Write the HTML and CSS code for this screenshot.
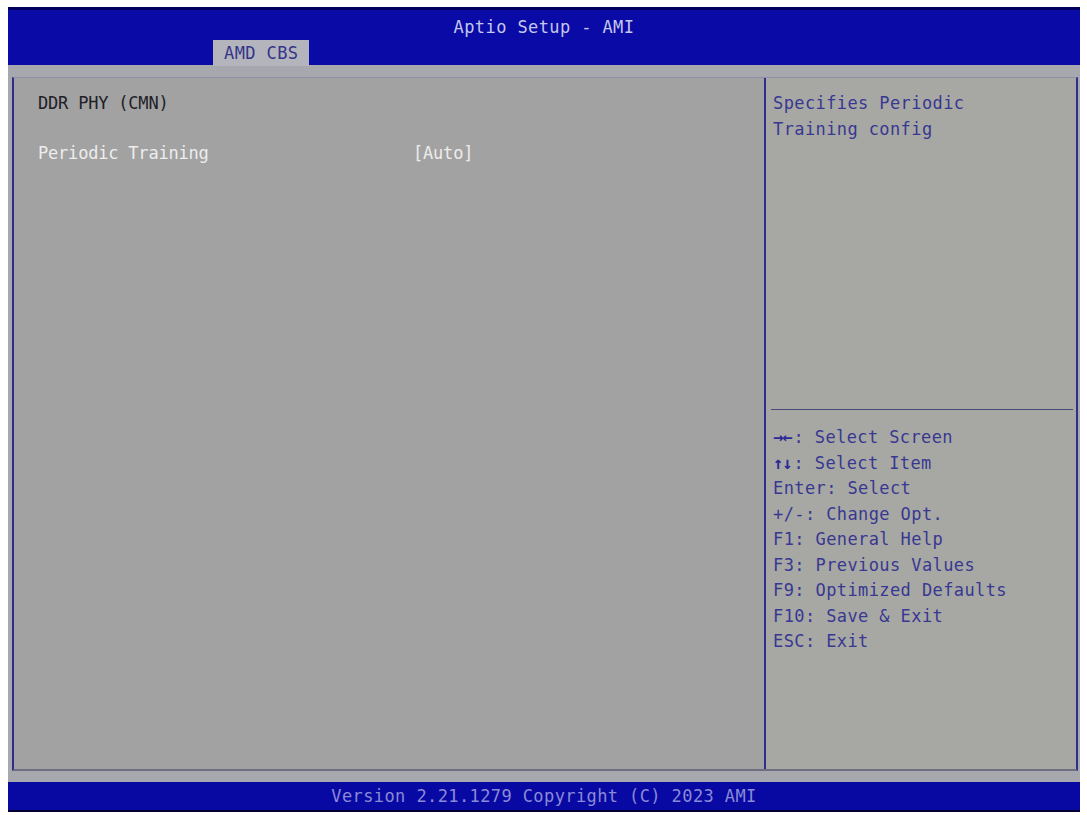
FILE: index.html
```html
<!DOCTYPE html>
<html lang="en">
<head>
    <meta charset="UTF-8">
    <meta name="viewport" content="width=device-width, initial-scale=1.0">
    <title>Aptio Setup - AMI</title>
    <link rel="stylesheet" href="styles.css">
</head>
<body>
    <div class="screen">
        <header class="top-bar">
            <div class="title">Aptio Setup - AMI</div>
            <div class="tabs">
                <span class="tab">AMD CBS</span>
            </div>
        </header>

        <main class="frame">
            <section class="menu">
                <div class="menu-heading">DDR PHY (CMN)</div>
                <div class="menu-blank"></div>
                <div class="menu-row">
                    <span class="menu-label">Periodic Training</span>
                    <span class="menu-value">[Auto]</span>
                </div>
            </section>

            <aside class="side">
                <div class="help">
                    <div>Specifies Periodic</div>
                    <div>Training config</div>
                </div>
                <div class="keys">
                    <div><span class="arrow">→←</span>: Select Screen</div>
                    <div><span class="arrow">↑↓</span>: Select Item</div>
                    <div>Enter: Select</div>
                    <div>+/-: Change Opt.</div>
                    <div>F1: General Help</div>
                    <div>F3: Previous Values</div>
                    <div>F9: Optimized Defaults</div>
                    <div>F10: Save &amp; Exit</div>
                    <div>ESC: Exit</div>
                </div>
            </aside>
        </main>

        <footer class="bottom-bar">Version 2.21.1279 Copyright (C) 2023 AMI</footer>
    </div>
</body>
</html>
```

FILE: styles.css
```css
body {
    margin: 0;
    background-color: #ffffff;
    font-family: 'DejaVu Sans Mono', 'Liberation Mono', monospace;
    font-size: 17px;
    letter-spacing: 0.4px;
}
.screen {
    margin: 7px 0 0 8px;
    width: 1072px;
    height: 805px;
    background-color: #a7a8ad;
    display: flex;
    flex-direction: column;
}
.top-bar {
    height: 58px;
    box-sizing: border-box;
    background-color: #0a0aa6;
    border-top: 3px solid #00005c;
    padding-top: 5px;
    display: flex;
    flex-direction: column;
}
.title {
    height: 25px;
    line-height: 25px;
    text-align: center;
    color: #c4c6ec;
}
.tabs {
    display: flex;
    padding-left: 205px;
}
.tab {
    height: 26px;
    line-height: 27px;
    padding: 0 11px 0 11px;
    background-color: #b4b5bc;
    color: #34348a;
}
.frame {
    margin: 12px 2px 11px 4px;
    height: 694px;
    box-sizing: border-box;
    display: flex;
    background-color: #a2a2a2;
    border-top: 1px solid #8e8ea8;
    border-left: 2px solid #2e2e8c;
    border-right: 2px solid #2e2e8c;
    border-bottom: 2px solid #6e6e80;
}
.menu {
    width: 752px;
    box-sizing: border-box;
    padding: 13px 0 0 24px;
    border-right: 2px solid #2e2e8c;
    line-height: 25px;
    letter-spacing: -0.2px;
}
.menu-heading {
    color: #202028;
}
.menu-blank {
    height: 25px;
}
.menu-row {
    display: grid;
    grid-template-columns: 375px auto;
    color: #ededed;
}
.side {
    flex: 1;
    display: flex;
    flex-direction: column;
    background-color: #a7a8a3;
    color: #383892;
    line-height: 25.5px;
}
.help {
    height: 332px;
    box-sizing: border-box;
    padding: 13px 0 0 7px;
    border-bottom: 1px solid #4a4a78;
    margin: 0 3px 0 5px;
}
.help div {
    margin-left: -5px;
}
.keys {
    padding: 15px 0 0 7px;
}
.arrow {
    font-weight: bold;
    color: #2a2a96;
    letter-spacing: -1px;
    margin-right: 2px;
}
.bottom-bar {
    height: 30px;
    box-sizing: border-box;
    background-color: #0808a2;
    border-bottom: 2px solid #000030;
    line-height: 28px;
    text-align: center;
    color: #8a8ad6;
}
```
